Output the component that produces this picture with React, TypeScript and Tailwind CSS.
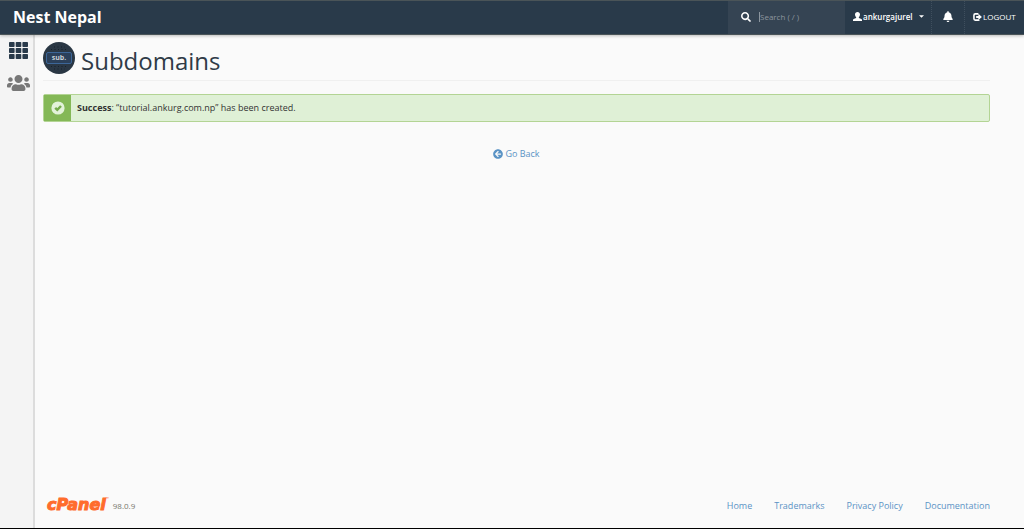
import { FaArrowCircleLeft, FaBell, FaSearch, FaUsers } from 'react-icons/fa'

const footerLinks = ['Home', 'Trademarks', 'Privacy Policy', 'Documentation']

function UserIcon() {
  return (
    <svg viewBox="0 0 18 18" className="w-[9px] h-[9px]" fill="currentColor" aria-hidden="true">
      <path d="M9 0c3 0 5 1.700 5 5 0 2.400-1.200 4.300-2.300 5.400v1.500l5.100 2.200c.8.400 1.200 1.200 1.200 2.100V18H0v-1.800c0-.9.400-1.700 1.200-2.100l5.100-2.200v-1.500C5.200 9.300 4 7.400 4 5c0-3.300 2-5 5-5z" />
    </svg>
  )
}

function LogoutIcon() {
  return (
    <svg viewBox="0 0 20 18" className="w-[9px] h-2" aria-hidden="true">
      <path d="M12 2H5a3 3 0 0 0-3 3v8a3 3 0 0 0 3 3h7a3 3 0 0 0 2-1" fill="none" stroke="currentColor" strokeWidth="3.500" />
      <path d="M12 1.500 20 9l-8 6.500V11H7V6.500h5z" fill="currentColor" />
    </svg>
  )
}

function GridIcon() {
  return (
    <svg viewBox="0 0 19 17" className="w-[19px] h-[17px]" fill="#293a4a" aria-hidden="true">
      {[0, 6, 12].map((y) =>
        [0, 6.700, 13.400].map((x) => <rect key={`${x}-${y}`} x={x} y={y} width="5.600" height="5" rx="0.800" />)
      )}
    </svg>
  )
}

function SuccessIcon() {
  return (
    <svg viewBox="0 0 14 14" className="w-[14px] h-[14px]" aria-hidden="true">
      <circle cx="7" cy="7" r="6.600" fill="#e3f2da" />
      <path d="M4.200 6.800 6.300 8.900 10 5" fill="none" stroke="#74aa4b" strokeWidth="2.400" />
    </svg>
  )
}

function SubdomainIcon() {
  return (
    <div className="grid shrink-0 w-8 h-8 place-items-center">
      <svg viewBox="0 0 32 32" className="col-start-1 row-start-1 w-8 h-8" aria-hidden="true">
        <circle cx="16" cy="16" r="16" fill="#2a3744" />
        <g stroke="#17212b" strokeWidth="1" strokeDasharray="1 2.500">
          <path d="M11 5h11M8 7.500h17M8 24.500h17M11 27h11" />
        </g>
        <rect x="3.500" y="10.500" width="25" height="11" rx="1.500" fill="#2b405a" stroke="#3c6698" />
      </svg>
      <span className="col-start-1 row-start-1 text-[7px] leading-[8px] font-bold text-[#c9d0d6]">sub.</span>
    </div>
  )
}

function Header() {
  return (
    <header className="relative z-10 flex items-stretch justify-between h-[35px] bg-[#293a4a] border-y border-[#4a5458] text-white shadow-[0_1px_3px_rgba(0,0,0,0.25)]">
      <a href="#home" className="flex items-center pl-[13px] pb-0.5 text-base font-bold">Nest Nepal</a>

      <div className="flex items-stretch text-[8px]">
        <label className="flex items-center w-[117px] bg-[#354453] pl-[13px] pb-0.5 gap-2">
          <FaSearch className="w-[10px] h-[10px] shrink-0" />
          <span className="w-px h-[10px] bg-[#8b959e]" />
          <input
            type="text"
            aria-label="Search"
            placeholder="Search ( / )"
            className="-ml-2 w-16 bg-transparent outline-none placeholder:text-[#8d969e]"
          />
        </label>

        {/* Account */}
        <button className="flex items-center w-[87px] pl-2 pb-0.5 border-r border-dotted border-[#3f4f5e]">
          <UserIcon />
          <span className="ml-px font-semibold">ankurgajurel</span>
          <svg viewBox="0 0 6 3" className="ml-auto mr-[7px] w-[5px] h-[3px]" fill="currentColor" aria-hidden="true">
            <path d="M0 0h6L3 3z" />
          </svg>
        </button>
        <button aria-label="Notifications" className="flex items-center justify-center w-[33px] pb-0.5 border-r border-dotted border-[#3f4f5e]">
          <FaBell className="w-[10px] h-[11px]" />
        </button>
        <a href="#logout" className="flex items-center w-[59px] pl-2 pb-0.5 gap-px">
          <LogoutIcon />
          <span>LOGOUT</span>
        </a>
      </div>
    </header>
  )
}

function Footer() {
  return (
    <footer className="flex items-center justify-between mt-auto pl-1 pb-[11px]">
      <div className="flex items-center gap-1">
        <a href="#cpanel" className="flex items-start pb-0.5 text-[#ff6c2c]">
          <span className="font-['DejaVu_Sans',sans-serif] text-base leading-5 font-bold italic [-webkit-text-stroke:1px]">cPanel</span>
          <span className="text-[4px] leading-[8px]">™</span>
        </a>
        <span className="text-[8px] text-[#77776c]">98.0.9</span>
      </div>
      <nav className="flex gap-[22px] text-[9px] text-[#5a93c5]">
        {footerLinks.map((name) => (
          <a key={name} href={`#${name.toLowerCase().replace(' ', '-')}`}>{name}</a>
        ))}
      </nav>
    </footer>
  )
}

export default function App() {
  return (
    <div className="flex flex-col min-h-screen bg-[#fafafa] border-b border-black font-['Open_Sans',sans-serif] text-[#333]">
      <Header />

      <div className="flex grow">
        {/* Sidebar */}
        <aside className="flex flex-col items-center w-[35px] shrink-0 pt-[7px] pl-1 gap-[13px] bg-[#f4f4f4] border-r-2 border-[#dcdcdc]">
          <a href="#tools" aria-label="Tools"><GridIcon /></a>
          <a href="#users" aria-label="User Manager" className="text-[#777]"><FaUsers className="w-[23px] h-[22px]" /></a>
        </aside>

        <main className="flex flex-col grow pl-2 pr-[34px] pt-[7px]">
          <div className="flex items-start gap-[6px] border-b border-[#f0f0f0]">
            <SubdomainIcon />
            <h1 className="text-2xl leading-[38px] text-[#2f3b47]">Subdomains</h1>
          </div>

          <div role="status" className="flex mt-[13px] h-7 bg-[#dff0d6] border border-[#b3d494] rounded-[2px] text-[9px]">
            <div className="flex items-center justify-center w-[27px] bg-[#84b857]">
              <SuccessIcon />
            </div>
            <p className="flex items-center pl-[6px]">
              <span><strong>Success</strong>: “tutorial.ankurg.com.np” has been created.</span>
            </p>
          </div>

          <a href="#back" className="flex items-center gap-[2px] self-center mt-[25px] text-[9px] text-[#5a93c5]">
            <FaArrowCircleLeft className="w-[10px] h-[10px]" />
            Go Back
          </a>

          <Footer />
        </main>
      </div>
    </div>
  )
}
